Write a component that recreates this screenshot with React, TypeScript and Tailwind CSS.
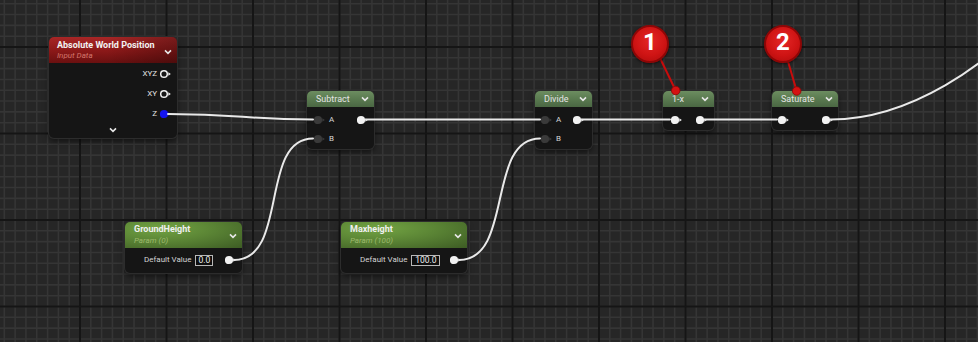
import React from "react";

type PinKind = "white" | "ring" | "blue" | "dark";

function Pin({ kind, className = "" }: { kind: PinKind; className?: string }) {
  const fill =
    kind === "white" ? "#f2f2f2" : kind === "blue" ? "#1414f0" : kind === "dark" ? "#3a3a3a" : "none";
  const arrow = kind === "blue" ? "#1414f0" : kind === "dark" ? "#3a3a3a" : "#f2f2f2";
  return (
    <svg width="11" height="10" viewBox="0 0 11 10" className={`shrink-0 ${className}`}>
      {kind === "ring" ? (
        <circle cx="4" cy="5" r="3.3" fill="none" stroke="#eeeeee" strokeWidth="1.5" />
      ) : (
        <circle cx="4" cy="5" r="4.1" fill={fill} />
      )}
      <polygon points="8.3,3.2 10.8,5 8.3,6.8" fill={arrow} />
    </svg>
  );
}

function Chevron({ className = "" }: { className?: string }) {
  return (
    <svg width="8" height="6" viewBox="0 0 8 6" className={`shrink-0 ${className}`}>
      <polyline points="1,1.4 4,4.4 7,1.4" fill="none" stroke="#e6e6e6" strokeWidth="1.6" />
    </svg>
  );
}

function Grid() {
  const minor = 86.5 / 8;
  const xs: number[] = [];
  const ys: number[] = [];
  for (let i = -8; i < 100; i++) xs.push(80 + i * minor);
  for (let i = -8; i < 40; i++) ys.push(47 + i * minor);
  const mx: number[] = [];
  const my: number[] = [];
  for (let i = -1; i < 12; i++) mx.push(80 + i * 86.5);
  for (let i = -1; i < 5; i++) my.push(47 + i * 86.5);
  return (
    <svg className="absolute left-0 top-0" width="978" height="342">
      <rect width="978" height="342" fill="#262626" />
      {xs.map((x, i) => (
        <line key={`vx${i}`} x1={x} y1={0} x2={x} y2={342} stroke="#353535" strokeWidth="1.6" />
      ))}
      {ys.map((y, i) => (
        <line key={`hy${i}`} x1={0} y1={y} x2={978} y2={y} stroke="#353535" strokeWidth="1.6" />
      ))}
      {mx.map((x, i) => (
        <line key={`mx${i}`} x1={x} y1={0} x2={x} y2={342} stroke="#151515" strokeWidth="2" />
      ))}
      {my.map((y, i) => (
        <line key={`my${i}`} x1={0} y1={y} x2={978} y2={y} stroke="#151515" strokeWidth="2" />
      ))}
    </svg>
  );
}

const nodeShell =
  "absolute rounded-[5px] bg-[#151515] overflow-hidden flex flex-col shadow-[0_0_0_1px_#2c2c2c,0_3px_6px_rgba(0,0,0,0.55)]";
const mathHeader =
  "h-[16px] flex items-center justify-between pl-[9px] pr-[5px] bg-[linear-gradient(180deg,#6c8d60_0%,#5a7a50_50%,#4a6743_100%)]";
const paramHeader =
  "h-[26px] flex justify-between pl-[9px] pr-[5px] pt-[2px] bg-[radial-gradient(ellipse_at_30%_25%,#72a343_0%,#5b8535_45%,#3d5c24_100%)]";

function MathNode({
  left,
  width,
  title,
  labels,
  inKind,
  pl,
  pr,
}: {
  left: string;
  width: string;
  title: string;
  labels: string[] | null;
  inKind: PinKind;
  pl: string;
  pr: string;
}) {
  return (
    <div className={`${nodeShell} ${left} ${width} top-[91px]`}>
      <div className={mathHeader}>
        <span className="text-[9px] leading-none text-[#e4e4e4]">{title}</span>
        <Chevron />
      </div>
      <div className="flex flex-col pt-[3px] pb-[1px]">
        {labels ? (
          labels.map((l, i) => (
            <div key={l} className={`h-[19px] flex items-center ${pl} ${pr}`}>
              <Pin kind={inKind} />
              <span className="ml-[4px] text-[8px] leading-none text-[#d6d6d6]">{l}</span>
              {i === 0 && <Pin kind="white" className="ml-auto" />}
            </div>
          ))
        ) : (
          <div className={`h-[19px] flex items-center ${pl} ${pr}`}>
            <Pin kind={inKind} />
            <Pin kind="white" className="ml-auto" />
          </div>
        )}
      </div>
    </div>
  );
}

function ParamNode({
  left,
  width,
  title,
  sub,
  value,
  boxW,
}: {
  left: string;
  width: string;
  title: string;
  sub: string;
  value: string;
  boxW: string;
}) {
  return (
    <div className={`${nodeShell} ${left} ${width} top-[222px] h-[51px]`}>
      <div className={paramHeader}>
        <div className="flex flex-col">
          <span className="text-[9px] leading-[11px] font-bold text-[#f0f0f0]">{title}</span>
          <span className="mt-[1px] text-[8px] leading-[10px] italic text-[#9db96c]">{sub}</span>
        </div>
        <Chevron className="mt-[9px]" />
      </div>
      <div className="mt-[2px] h-[20px] flex items-center pl-[19px] pr-[6px]">
        <span className="text-[8px] leading-none text-[#d4d4d4]">Default Value</span>
        <div
          className={`ml-[4px] ${boxW} h-[11px] border border-[#b8b8b8] bg-[#0e0e0e] flex items-center justify-center text-[8.5px] leading-none text-[#f0f0f0]`}
        >
          {value}
        </div>
        <Pin kind="white" className="ml-auto" />
      </div>
    </div>
  );
}

function Wires() {
  const paths = [
    "M168 114 C 240 114, 245 119.5, 313 119.5",
    "M234 260 C 289 260, 259 138.5, 313 138.5",
    "M366 119.5 L540 119.5",
    "M459 260 C 514 260, 486 138.5, 540 138.5",
    "M582 119.5 L670 119.5",
    "M705 119.5 L777 119.5",
    "M831 119.5 C 900 119.5, 990 75, 1060 -20",
  ];
  return (
    <svg className="absolute left-0 top-0 pointer-events-none" width="978" height="342">
      {paths.map((d, i) => (
        <path key={i} d={d} fill="none" stroke="#e9e9e9" strokeWidth="2" strokeLinecap="round" />
      ))}
    </svg>
  );
}

function BadgeLines() {
  return (
    <svg className="absolute left-0 top-0 pointer-events-none" width="978" height="342">
      <line x1="660" y1="58" x2="675.7" y2="90.5" stroke="#c80c0c" strokeWidth="2" />
      <circle cx="675.7" cy="90.5" r="4.3" fill="#d41212" stroke="#8a0606" strokeWidth="0.8" />
      <line x1="787" y1="58" x2="796.7" y2="91" stroke="#c80c0c" strokeWidth="2" />
      <circle cx="796.7" cy="91" r="4.3" fill="#d41212" stroke="#8a0606" strokeWidth="0.8" />
    </svg>
  );
}

function Badge({ pos, n }: { pos: string; n: string }) {
  return (
    <div
      className={`absolute ${pos} top-[25px] w-[38px] h-[38px] rounded-full border-2 border-[#8e0606] bg-[radial-gradient(circle_at_50%_40%,#e42626_0%,#cf1414_55%,#aa0a0a_100%)] shadow-[0_1px_3px_rgba(0,0,0,0.6)] flex items-center justify-center pb-[4px]`}
    >
      <span className="text-[24px] leading-none font-bold text-white">{n}</span>
    </div>
  );
}

export default function App() {
  return (
    <div className="relative w-[978px] h-[342px] overflow-hidden bg-[#262626] font-['Roboto','Liberation_Sans',sans-serif]">
      <Grid />

      {/* Absolute World Position */}
      <div className={`${nodeShell} left-[49px] top-[37px] w-[128px] h-[101px]`}>
        <div className="h-[26px] flex justify-between pl-[8px] pr-[5px] pt-[3px] bg-[linear-gradient(90deg,rgba(0,0,0,0)_45%,rgba(0,0,0,0.28)_100%),linear-gradient(180deg,#a82626_0%,#8a1818_55%,#6a1010_100%)]">
          <div className="flex flex-col">
            <span className="text-[9px] leading-[11px] font-bold text-[#f2f2f2]">Absolute World Position</span>
            <span className="text-[8px] leading-[10px] italic text-[#d4766c]">Input Data</span>
          </div>
          <Chevron className="mt-[9px]" />
        </div>
        <div className="flex flex-col pt-[1px]">
          {(
            [
              ["XYZ", "ring"],
              ["XY", "ring"],
              ["Z", "blue"],
            ] as [string, PinKind][]
          ).map(([l, k]) => (
            <div key={l} className="h-[20px] flex items-center justify-end pr-[6px]">
              <span className="mr-[3px] text-[8px] leading-none text-[#e2e2e2]">{l}</span>
              <Pin kind={k} />
            </div>
          ))}
          <div className="h-[12px] flex items-center justify-center">
            <Chevron />
          </div>
        </div>
      </div>

      <MathNode left="left-[307px]" width="w-[67px]" title="Subtract" labels={["A", "B"]} inKind="dark" pl="pl-[7px]" pr="pr-[6px]" />
      <MathNode left="left-[535px]" width="w-[57px]" title="Divide" labels={["A", "B"]} inKind="dark" pl="pl-[6px]" pr="pr-[8px]" />
      <MathNode left="left-[663px]" width="w-[51px]" title="1-x" labels={null} inKind="white" pl="pl-[8px]" pr="pr-[7px]" />
      <MathNode left="left-[772px]" width="w-[66px]" title="Saturate" labels={null} inKind="white" pl="pl-[6px]" pr="pr-[5px]" />

      <ParamNode left="left-[125px]" width="w-[117px]" title="GroundHeight" sub="Param (0)" value="0.0" boxW="w-[18px]" />
      <ParamNode left="left-[341px]" width="w-[126px]" title="Maxheight" sub="Param (100)" value="100.0" boxW="w-[29px]" />

      <Wires />
      <BadgeLines />
      <Badge pos="left-[631px]" n="1" />
      <Badge pos="left-[764px]" n="2" />
    </div>
  );
}
